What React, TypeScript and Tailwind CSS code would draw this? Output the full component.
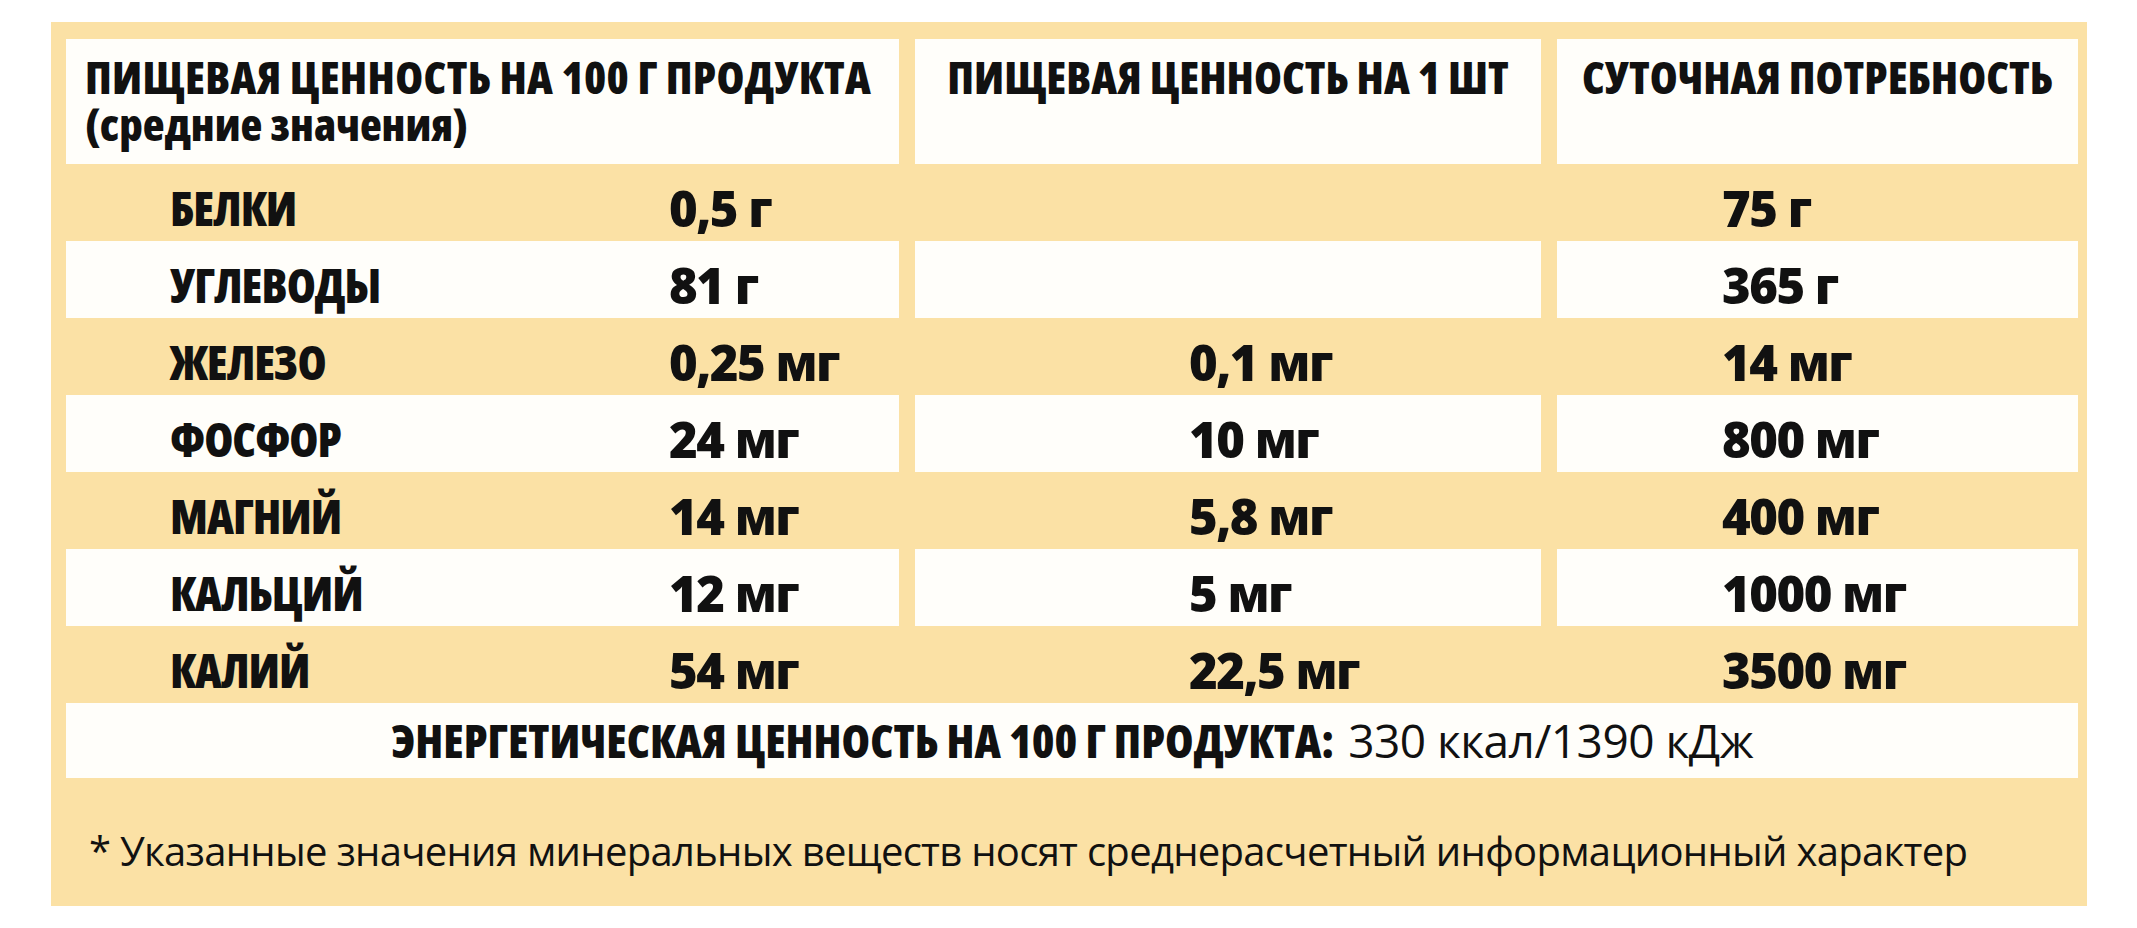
type Row = { name: string; per100: string; perPiece: string; daily: string };

const rows: Row[] = [
  { name: "БЕЛКИ", per100: "0,5 г", perPiece: "", daily: "75 г" },
  { name: "УГЛЕВОДЫ", per100: "81 г", perPiece: "", daily: "365 г" },
  { name: "ЖЕЛЕЗО", per100: "0,25 мг", perPiece: "0,1 мг", daily: "14 мг" },
  { name: "ФОСФОР", per100: "24 мг", perPiece: "10 мг", daily: "800 мг" },
  { name: "МАГНИЙ", per100: "14 мг", perPiece: "5,8 мг", daily: "400 мг" },
  { name: "КАЛЬЦИЙ", per100: "12 мг", perPiece: "5 мг", daily: "1000 мг" },
  { name: "КАЛИЙ", per100: "54 мг", perPiece: "22,5 мг", daily: "3500 мг" },
];

const sans = "font-['Open_Sans',sans-serif]";
const bold = `${sans} font-extrabold font-stretch-[75%]`;
// names are narrower than the figures in the print
const nameFont = "text-[47px] tracking-[-1px] font-stretch-[75%]";
const valueFont = "tracking-[-1.5px] font-stretch-[88%]";

export default function App() {
  return (
    <div className="min-h-[928px] bg-white pl-[51px] pt-[22px] text-[#111]">
      <div className="flex h-[884px] w-[2036px] flex-col bg-[#FBE1A5] pl-[15px] pr-[10px] pt-[17px]">
        <div className="grid grid-cols-[833px_626px_521px] gap-x-[16px]">
          <div className={`h-[125px] bg-[#FFFEFA] pl-[19px] pt-[14px] text-[45px] leading-[47px] ${bold}`}>
            <div className="tracking-[0.3px]">ПИЩЕВАЯ ЦЕННОСТЬ НА 100 Г ПРОДУКТА</div>
            <div>(средние значения)</div>
          </div>
          <div className={`h-[125px] bg-[#FFFEFA] pt-[14px] text-center text-[45px] leading-[47px] ${bold}`}>
            ПИЩЕВАЯ ЦЕННОСТЬ НА 1 ШТ
          </div>
          <div className={`h-[125px] bg-[#FFFEFA] pt-[14px] text-center text-[45px] leading-[47px] ${bold}`}>
            СУТОЧНАЯ ПОТРЕБНОСТЬ
          </div>

          {rows.map((r, i) => {
            const bg = i % 2 === 1 ? "bg-[#FFFEFA]" : "";
            const cell = `flex h-[77px] items-center pt-[11px] text-[49px] leading-[66px] ${sans} font-extrabold ${bg}`;
            return (
              <div key={r.name} className="contents">
                <div className={`${cell} pl-[104px]`}>
                  <span className={`w-[499px] ${nameFont}`}>{r.name}</span>
                  <span className={valueFont}>{r.per100}</span>
                </div>
                <div className={`${cell} pl-[274px] ${valueFont}`}>{r.perPiece}</div>
                <div className={`${cell} pl-[165px] ${valueFont}`}>{r.daily}</div>
              </div>
            );
          })}
        </div>

        <div className="flex h-[75px] w-[2012px] items-center justify-center bg-[#FFFEFA] text-[46px] leading-[75px]">
          <span className={bold}>ЭНЕРГЕТИЧЕСКАЯ ЦЕННОСТЬ НА 100 Г ПРОДУКТА:</span>
          <span className={`${sans} ml-[14px] font-normal tracking-[-0.5px] font-stretch-[92%]`}>330 ккал/1390 кДж</span>
        </div>

        <p className={`mt-[53px] whitespace-nowrap pl-[23px] text-[40px] leading-[40px] tracking-[-0.7px] ${sans} font-normal font-stretch-[89%]`}>
          * Указанные значения минеральных веществ носят среднерасчетный информационный характер
        </p>
      </div>
    </div>
  );
}
